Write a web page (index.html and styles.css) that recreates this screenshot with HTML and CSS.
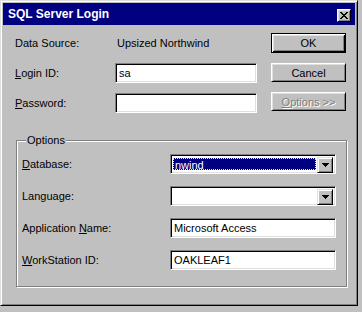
FILE: index.html
```html
<html>
<head>
    <link rel="stylesheet" href="styles.css">
</head>
<body>
    <div class="window">
        <div class="titlebar">
            <span class="title">SQL Server Login</span>
            <span class="close">
                <svg width="8" height="7" viewBox="0 0 8 7" shape-rendering="crispEdges">
                    <rect x="0" y="0" width="2" height="1"/><rect x="6" y="0" width="2" height="1"/>
                    <rect x="1" y="1" width="2" height="1"/><rect x="5" y="1" width="2" height="1"/>
                    <rect x="2" y="2" width="4" height="1"/>
                    <rect x="3" y="3" width="2" height="1"/>
                    <rect x="2" y="4" width="4" height="1"/>
                    <rect x="1" y="5" width="2" height="1"/><rect x="5" y="5" width="2" height="1"/>
                    <rect x="0" y="6" width="2" height="1"/><rect x="6" y="6" width="2" height="1"/>
                </svg>
            </span>
        </div>

        <div class="content">
            <div class="top">
                <div class="fields">
                    <span class="label">Data Source:</span>
                    <span class="value">Upsized Northwind</span>
                    <span class="label"><u>L</u>ogin ID:</span>
                    <div class="field">sa</div>
                    <span class="label"><u>P</u>assword:</span>
                    <div class="field"></div>
                </div>
                <div class="buttons">
                    <button class="btn default">OK</button>
                    <button class="btn">Cancel</button>
                    <button class="btn disabled"><u>O</u>ptions &gt;&gt;</button>
                </div>
            </div>

            <fieldset class="group">
                <legend>Options</legend>
                <div class="group-grid">
                    <span class="label"><u>D</u>atabase:</span>
                    <div class="combo">
                        <div class="combo-value"><span class="selected">nwind</span></div>
                        <span class="combo-btn">
                            <svg width="7" height="4" viewBox="0 0 7 4" shape-rendering="crispEdges">
                                <rect x="0" y="0" width="7" height="1"/><rect x="1" y="1" width="5" height="1"/>
                                <rect x="2" y="2" width="3" height="1"/><rect x="3" y="3" width="1" height="1"/>
                            </svg>
                        </span>
                    </div>

                    <span class="label">Language:</span>
                    <div class="combo">
                        <div class="combo-value"></div>
                        <span class="combo-btn">
                            <svg width="7" height="4" viewBox="0 0 7 4" shape-rendering="crispEdges">
                                <rect x="0" y="0" width="7" height="1"/><rect x="1" y="1" width="5" height="1"/>
                                <rect x="2" y="2" width="3" height="1"/><rect x="3" y="3" width="1" height="1"/>
                            </svg>
                        </span>
                    </div>

                    <span class="label">Application <u>N</u>ame:</span>
                    <div class="field">Microsoft Access</div>

                    <span class="label"><u>W</u>orkStation ID:</span>
                    <div class="field">OAKLEAF1</div>
                </div>
            </fieldset>
        </div>
    </div>
</body>
</html>
```

FILE: styles.css
```css
body {
    margin: 0;
    background-color: #c0c0c0;
    font-family: "Liberation Sans", Arial, sans-serif;
    font-size: 11px;
    color: #000;
}
.window {
    width: 358px;
    height: 306px;
    box-sizing: border-box;
    border: 1px solid;
    border-color: #dfdfdf #000 #000 #dfdfdf;
    box-shadow: inset 1px 1px 0 #fff, inset -1px -1px 0 #808080;
    padding: 2px;
    background-color: #c0c0c0;
}
.titlebar {
    height: 22px;
    box-sizing: border-box;
    background-color: #000080;
    color: #fff;
    display: flex;
    align-items: flex-end;
    justify-content: space-between;
    padding: 0 4px 3px 5px;
}
.title {
    align-self: center;
    margin-top: 2px;
    font-size: 12px;
    font-weight: bold;
}
.close {
    width: 14px;
    height: 13px;
    box-sizing: border-box;
    background-color: #c0c0c0;
    border: 1px solid;
    border-color: #fff #000 #000 #fff;
    box-shadow: inset 1px 1px 0 #dfdfdf, inset -1px -1px 0 #808080;
    display: flex;
    align-items: center;
    justify-content: center;
}
.content {
    padding: 8px 0 0 12px;
}
.top {
    display: flex;
    gap: 14px;
}
.fields {
    display: grid;
    grid-template-columns: 100px 142px;
    grid-auto-rows: 20px;
    row-gap: 10px;
    align-items: center;
}
.value {
    padding-left: 2px;
}
.field {
    height: 20px;
    box-sizing: border-box;
    background-color: #fff;
    border: 1px solid;
    border-color: #808080 #fff #fff #808080;
    box-shadow: inset 1px 1px 0 #000, inset -1px -1px 0 #dfdfdf;
    padding: 0 3px;
    display: flex;
    align-items: center;
}
.buttons {
    display: flex;
    flex-direction: column;
    gap: 10px;
}
.btn {
    width: 75px;
    height: 19px;
    padding: 0;
    font-family: inherit;
    font-size: 11px;
    color: #000;
    background-color: #c0c0c0;
    border: 1px solid;
    border-color: #fff #000 #000 #fff;
    box-shadow: inset 1px 1px 0 #dfdfdf, inset -1px -1px 0 #808080;
}
.btn.default {
    height: 20px;
    border-color: #000;
    box-shadow: inset 1px 1px 0 #fff, inset -1px -1px 0 #000, inset 2px 2px 0 #dfdfdf, inset -2px -2px 0 #808080;
}
.btn.disabled {
    color: #808080;
    text-shadow: 1px 1px 0 #fff;
}
.group {
    margin: 21px 0 0 1px;
    width: 330px;
    box-sizing: border-box;
    border: 1px solid #808080;
    box-shadow: inset 1px 1px 0 #fff, 1px 1px 0 #fff;
    padding: 7px 10px 16px 5px;
}
.group legend {
    padding: 0 1px;
    margin-left: 4px;
    line-height: 13px;
    background-color: #c0c0c0;
}
.group-grid {
    display: grid;
    grid-template-columns: 148px 166px;
    grid-auto-rows: 20px;
    row-gap: 12px;
    align-items: center;
}
.combo {
    height: 20px;
    box-sizing: border-box;
    background-color: #fff;
    border: 1px solid;
    border-color: #808080 #fff #fff #808080;
    box-shadow: inset 1px 1px 0 #000, inset -1px -1px 0 #dfdfdf;
    padding: 2px;
    display: flex;
}
.combo-value {
    flex: 1;
    display: flex;
    padding: 1px 1px 1px 0;
}
.selected {
    flex: 1;
    background-color: #000080;
    color: #fff;
    border: 1px dotted #f0f080;
    padding-left: 1px;
    line-height: 12px;
}
.combo-btn {
    width: 16px;
    height: 16px;
    box-sizing: border-box;
    background-color: #c0c0c0;
    border: 1px solid;
    border-color: #dfdfdf #000 #000 #dfdfdf;
    box-shadow: inset 1px 1px 0 #fff, inset -1px -1px 0 #808080;
    display: flex;
    align-items: center;
    justify-content: center;
}
```
